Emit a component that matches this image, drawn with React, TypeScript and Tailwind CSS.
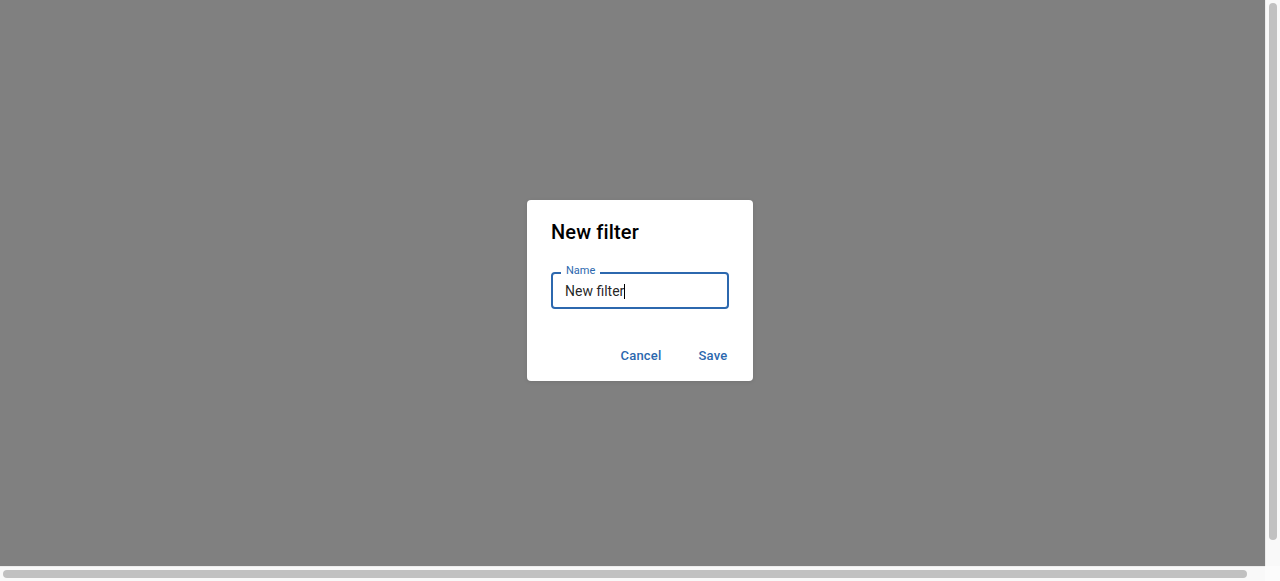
import React from 'react';

function Thumb({ className }: { className: string }) {
  return <div className={`rounded-full bg-[#c1c1c1] ${className}`} />;
}

export default function App() {
  return (
    <div className="relative w-screen h-screen overflow-hidden bg-white font-['Roboto',sans-serif]">
      <div className="flex flex-col h-full">
        <div className="flex flex-1">
          {/* backdrop */}
          <div className="flex-1 bg-[#808080]" />
          {/* vertical scrollbar */}
          <div className="w-[15px] bg-[#f9f9f9] border-l border-[#ececec] pt-[3px] pl-[3px] pr-[3px]">
            <Thumb className="w-[8px] h-[537px]" />
          </div>
        </div>
        <div className="flex h-[15px]">
          <div className="flex-1 bg-[#f9f9f9] border-t border-[#ececec] pl-[3px] pt-[3px]">
            <Thumb className="h-[8px] w-[1244px]" />
          </div>
          <div className="w-[15px] bg-[#fcfcfc]" />
        </div>
      </div>

      {/* dialog */}
      <div className="absolute left-[527px] top-[200px] w-[226px] h-[181px] bg-white rounded shadow-[0_1px_4px_rgba(0,0,0,0.1)] flex flex-col">
        <h2 className="px-6 pt-4 pb-4 text-[20px] leading-[32px] font-medium tracking-[0.15px] text-black">
          New filter
        </h2>

        <div className="px-6 pb-5 pt-2">
          <div className="relative h-[37px] w-[178px] rounded border-2 border-[#2c68ae] flex items-center pl-3 pt-px">
            <span className="absolute -top-[10px] left-[8px] bg-white px-[5px] text-[11px] leading-[14px] text-[#2c68ae]">
              Name
            </span>
            <span className="text-[14px] leading-[20px] text-black/[0.87] flex items-center">
              New filter
              <span className="inline-block w-px h-[15px] bg-black" />
            </span>
          </div>
        </div>

        <div className="flex-1 flex items-center justify-end gap-2 px-2 pt-[2px]">
          <button className="min-w-16 h-[31px] px-2 rounded text-[13px] font-medium tracking-[0.2px] text-[#2c68ae]">
            Cancel
          </button>
          <button className="min-w-16 h-[31px] px-2 rounded text-[13px] font-medium tracking-[0.2px] text-[#2c68ae]">
            Save
          </button>
        </div>
      </div>
    </div>
  );
}
